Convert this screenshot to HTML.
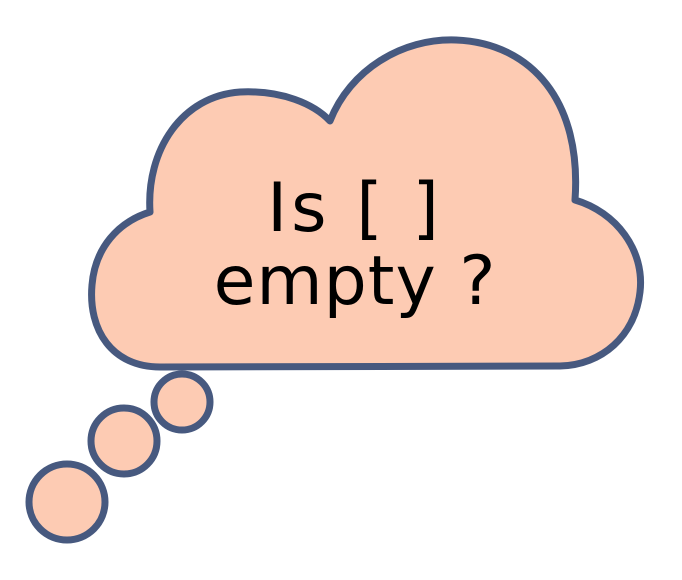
<!DOCTYPE html>
<html><head><style>
html,body{margin:0;padding:0;background:#fff;width:682px;height:580px;overflow:hidden}
svg{display:block}
text{font-family:"DejaVu Sans","Liberation Sans",sans-serif;font-size:68px;fill:#000}
</style></head><body>
<svg width="682" height="580" viewBox="0 0 682 580">
<g fill="#FDCBB3" stroke="#47597F" stroke-width="7" stroke-linejoin="round">
<path d="M160,367 C112,367 88,330 92,285 C95,248 118,222 150,212 C146,150 182,96 240,92 C282,90 314,104 330,121 C350,70 402,38 456,40 C532,43 582,102 575,200 C616,212 645,250 640,292 C635,336 602,365 560,366 Z"/>
<circle cx="182" cy="402" r="28"/>
<circle cx="124" cy="441" r="33"/>
<circle cx="67" cy="502" r="38"/>
</g>
<text x="355" y="231" text-anchor="middle" letter-spacing="4">Is [ ]</text>
<text x="355" y="304" text-anchor="middle" letter-spacing="1">empty ?</text>
</svg>
</body></html>
